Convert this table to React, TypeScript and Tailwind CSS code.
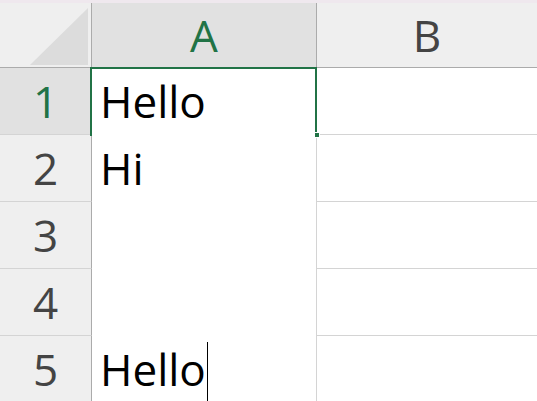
const font = "font-['Open_Sans','Noto_Sans',sans-serif]";

const rows = [
  { n: 1, text: "Hello", selected: true },
  { n: 2, text: "Hi" },
  { n: 3, text: "" },
  { n: 4, text: "" },
  { n: 5, text: "Hello", caret: true },
];

export default function App() {
  return (
    <div className={`relative h-[401px] w-[537px] overflow-hidden bg-white ${font}`}>
      <div className="h-[3px] bg-[#efe8ee]" />

      <div className="grid grid-cols-[92px_225px_1fr]">
        {/* header row */}
        <div className="relative h-[65px] border-b border-r border-[#ababab] bg-[#efefef]">
          <svg className="absolute left-[30px] top-[5px]" width="58" height="57" viewBox="0 0 58 57">
            <polygon points="0,57 58,57 58,0" fill="#dcdcdc" />
          </svg>
        </div>
        <div className="flex h-[65px] items-center justify-center border-b border-r border-[#ababab] bg-[#e1e1e1] text-[44px] leading-none text-[#217346]">
          A
        </div>
        <div className="flex h-[65px] items-center justify-center border-b border-[#ababab] bg-[#efefef] text-[44px] leading-none text-[#444]">
          B
        </div>

        {rows.map((r) => (
          <Row key={r.n} {...r} />
        ))}
      </div>

      {/* active cell A1 */}
      <div className="pointer-events-none absolute left-[90px] top-[67px] h-[69px] w-[227px] border-x-2 border-t-2 border-[#217346]" />
      <div className="absolute left-[315px] top-[133px] h-[4px] w-[4px] bg-[#217346] outline outline-1 outline-white" />
    </div>
  );
}

function Row({ n, text, selected, caret }: { n: number; text: string; selected?: boolean; caret?: boolean }) {
  return (
    <>
      <div
        className={`flex h-[67px] items-center justify-center border-b border-r border-b-[#d4d4d4] border-r-[#ababab] text-[44px] leading-none ${
          selected ? "bg-[#e1e1e1] text-[#217346]" : "bg-[#efefef] text-[#444]"
        }`}
      >
        {n}
      </div>
      <div className="flex h-[67px] items-end border-r border-[#d4d4d4] pb-[12px] pl-[8px] text-[44px] leading-none text-black">
        <span className="relative">
          {text}
          {caret && <span className="absolute -right-[2px] bottom-[-14px] h-[63px] w-px bg-black" />}
        </span>
      </div>
      <div className="h-[67px] border-b border-[#d4d4d4]" />
    </>
  );
}
